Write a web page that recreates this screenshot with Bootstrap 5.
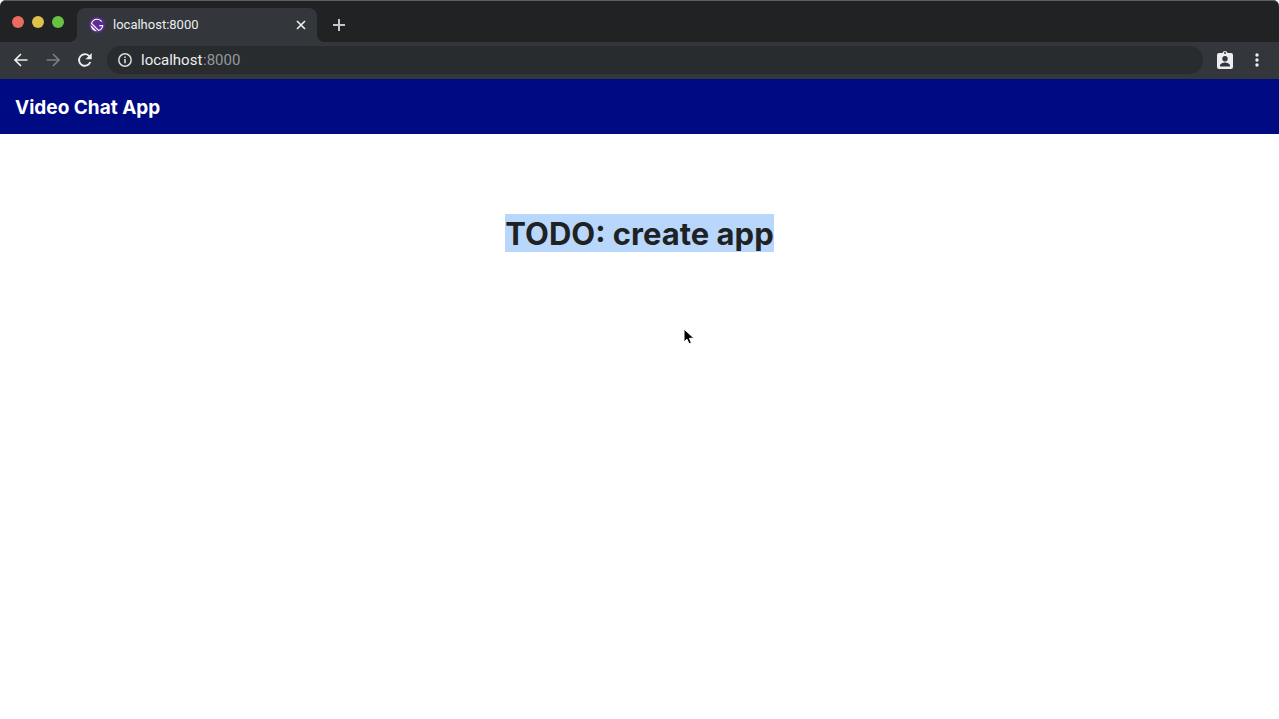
<!DOCTYPE html>
<html lang="en">
<head>
<meta charset="utf-8">
<meta name="viewport" content="width=device-width, initial-scale=1">
<title>Video Chat App</title>
<link href="https://cdn.jsdelivr.net/npm/bootstrap@5.3.0/dist/css/bootstrap.min.css" rel="stylesheet">
<style>
  body { font-family: Inter, "Liberation Sans", sans-serif; color: #1f2223; background: #fff; }
  svg { display: block; flex: none; }
  .window { border-radius: 6px 6px 0 0; background: #202223; }
  .tab-strip { height: 42px; padding: 7px 12px 0; border-top: 1px solid #5d5f60; border-radius: 6px 6px 0 0; }
  .lights { gap: 8px; padding-top: 8px; margin-right: 13px; }
  .light { width: 12px; height: 12px; border-radius: 50%; padding: 0; border: 0; }
  .light-close { background: #ed6a5e; }
  .light-min { background: #e0c04c; }
  .light-max { background: #6ac244; }
  .browser-tab { position: relative; width: 240px; height: 34px; padding: 0 10px 0 12px; border-radius: 8px 8px 0 0; background: #33363a; font: 13px/18px Roboto, sans-serif; color: #eceeef; }
  .browser-tab::before, .browser-tab::after { content: ""; position: absolute; bottom: 0; width: 8px; height: 8px; }
  .browser-tab::before { right: 100%; background: radial-gradient(circle at 0 0, transparent 8px, #33363a 8px); }
  .browser-tab::after { left: 100%; background: radial-gradient(circle at 100% 0, transparent 8px, #33363a 8px); }
  .icon-btn { padding: 0; border: 0; background: none; }
  .new-tab { margin: 11px 0 0 16px; }
  .toolbar { height: 37px; padding: 0 14px 2px 13px; background: #33363a; }
  .nav-icons { gap: 16px; margin-right: 14px; }
  .address { height: 28px; margin-right: 14px; padding: 0 10px; gap: 8px; border-radius: 14px; background: #282c2e; font: 15px/20px Roboto, sans-serif; color: #96999b; }
  .address input { width: 62px; padding: 0; border: 0; outline: 0; background: none; color: #eceeef; font: inherit; }
  .app-bar { min-height: 55px; padding: 2px 15px 0; background: #000a82; }
  .app-title { font-size: 19px; line-height: 24px; font-weight: 700; color: #fff; }
  .headline { margin: 80px 0 0; font-size: 31px; line-height: 36px; font-weight: 700; }
  .selected { display: inline-block; padding-top: 2px; background: #b9d7fb; }
  .pointer { position: absolute; left: 682px; top: 327px; }
</style>
</head>
<body>
<header class="window">
  <div class="tab-strip d-flex align-items-start">
    <div class="lights d-flex">
      <button class="light light-close" aria-label="Close window"></button>
      <button class="light light-min" aria-label="Minimize window"></button>
      <button class="light light-max" aria-label="Zoom window"></button>
    </div>
    <div class="browser-tab d-flex align-items-center">
      <svg width="16" height="16" viewBox="0 0 28 28" aria-hidden="true"><circle cx="14" cy="14" r="14" fill="#5c2d91"/><path fill="#fff" d="M6.2 21.8C4.1 19.7 3 16.9 3 14.2L13.9 25c-2.8-.1-5.6-1.1-7.7-3.2zm10.2 2.9L3.3 11.6C4.4 6.7 8.8 3 14 3c3.7 0 6.9 1.8 8.9 4.5l-1.5 1.3C19.7 6.5 17 5 14 5c-3.9 0-7.2 2.5-8.5 6L17 22.5c2.9-1 5.1-3.5 5.8-6.5H18v-2h7c0 5.2-3.7 9.6-8.6 10.7z"/></svg>
      <span class="ms-2 me-auto">localhost:8000</span>
      <button class="icon-btn" aria-label="Close tab"><svg width="12" height="12" viewBox="0 0 12 12" stroke="#eceeef" stroke-width="1.7"><path d="m2 2 8 8M10 2l-8 8"/></svg></button>
    </div>
    <button class="icon-btn new-tab" aria-label="New tab"><svg width="12" height="12" viewBox="0 0 12 12" stroke="#c3c5c6" stroke-width="2"><path d="M6 0v12M0 6h12"/></svg></button>
  </div>
  <div class="toolbar d-flex align-items-center">
    <div class="nav-icons d-flex">
      <button class="icon-btn" aria-label="Back"><svg width="16" height="16" viewBox="0 0 16 16" fill="none" stroke="#eceeef" stroke-width="1.7"><path d="M14.5 8H2.5M8 2 2 8l6 6"/></svg></button>
      <button class="icon-btn" aria-label="Forward"><svg width="16" height="16" viewBox="0 0 16 16" fill="none" stroke="#7c7f82" stroke-width="1.7"><path d="M1.5 8h12M8 2l6 6-6 6"/></svg></button>
      <button class="icon-btn" aria-label="Reload"><svg width="16" height="16" viewBox="0 0 16 16"><path d="M13.3 10A5.8 5.8 0 1 1 12 3.9L13.6 5.4" fill="none" stroke="#eceeef" stroke-width="1.9"/><path d="M14.7 1v6.2H8.5z" fill="#eceeef"/></svg></button>
    </div>
    <div class="address d-flex align-items-center flex-grow-1">
      <svg width="16" height="16" viewBox="0 0 16 16" aria-hidden="true"><circle cx="8" cy="8" r="6.2" fill="none" stroke="#d9dbdc" stroke-width="1.5"/><path d="M8 7v4.3M8 4.4V6" stroke="#d9dbdc" stroke-width="1.6"/></svg>
      <div class="d-flex"><input type="text" id="host" value="localhost" aria-label="Address"><label for="host">:8000</label></div>
    </div>
    <button class="icon-btn" aria-label="Profile"><svg width="16" height="20" viewBox="0 0 16 20"><path fill="#eceeef" fill-rule="evenodd" d="M2 3h3.4a2.7 2.7 0 0 1 5.2 0H14q2 0 2 2v12q0 2-2 2H2q-2 0-2-2V5q0-2 2-2zm6-1a1 1 0 1 0 0 2 1 1 0 0 0 0-2zm0 4a2.7 2.7 0 1 0 0 5.4A2.7 2.7 0 0 0 8 6zm-5 10.5h10v-1c0-2-3.3-3-5-3s-5 1-5 3z"/></svg></button>
    <button class="icon-btn ms-3" aria-label="Menu"><svg width="16" height="16" viewBox="0 0 16 16" fill="#eceeef"><circle cx="8" cy="3" r="1.7"/><circle cx="8" cy="8" r="1.7"/><circle cx="8" cy="13" r="1.7"/></svg></button>
  </div>
</header>
<nav class="app-bar navbar">
  <a class="app-title text-decoration-none" href="#">Video Chat App</a>
</nav>
<main class="container-fluid text-center">
  <h1 class="headline"><span class="selected">TODO: create app</span></h1>
</main>
<svg class="pointer" width="14" height="20" viewBox="0 0 14 20" aria-hidden="true"><path d="M2 2v13l3-2.8 2 4.6 2.4-1-2-4.5H12z" fill="#000" stroke="#fff" stroke-width="1"/></svg>
<script src="https://cdn.jsdelivr.net/npm/bootstrap@5.3.0/dist/js/bootstrap.bundle.min.js"></script>
</body>
</html>
